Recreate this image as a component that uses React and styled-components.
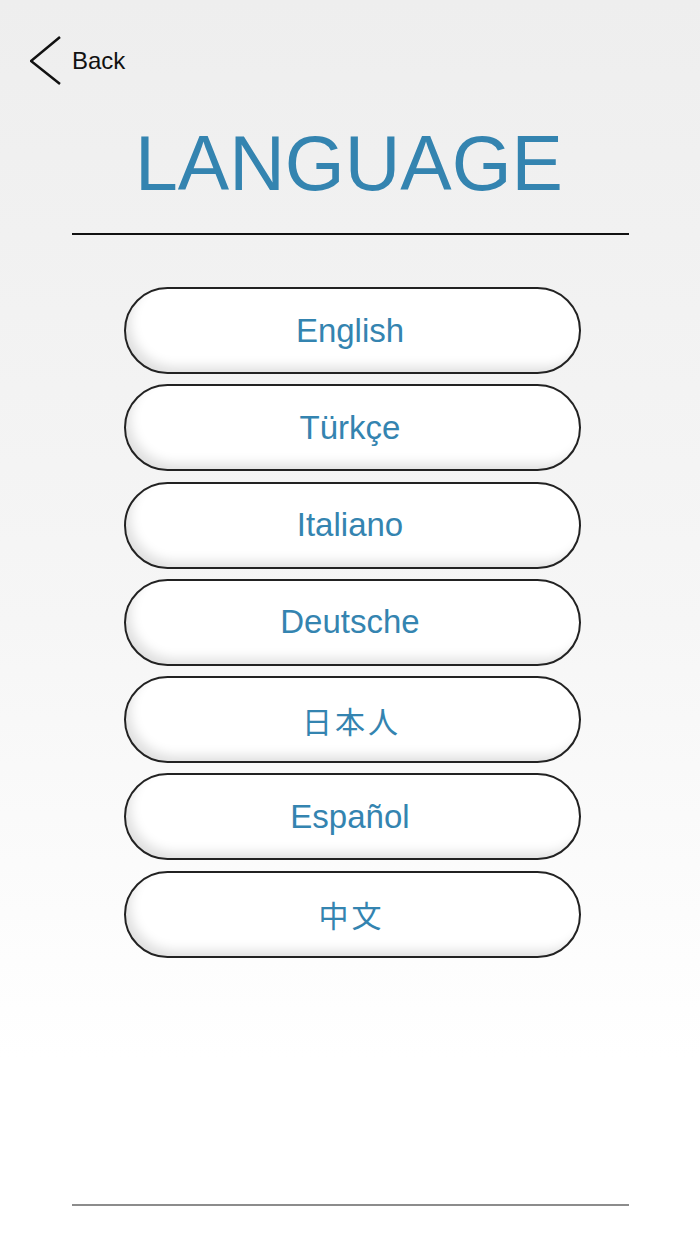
import React from "react";
import styled, { createGlobalStyle } from "styled-components";

const Global = createGlobalStyle`
  html, body { margin: 0; padding: 0; }
  body { font-family: "Liberation Sans", Arial, sans-serif; }
`;

const Page = styled.div`
  width: 700px;
  height: 1244px;
  box-sizing: border-box;
  background: linear-gradient(to bottom, #eeeeee 0%, #f6f6f6 50%, #ffffff 85%, #ffffff 100%);
  display: flex;
  flex-direction: column;
  overflow: hidden;
`;

const TopBar = styled.div`
  display: flex;
  align-items: center;
  gap: 10px;
  padding: 36px 0 0 30px;
  height: 50px;
`;

const BackLabel = styled.span`
  font-size: 24px;
  color: #111;
  line-height: 1;
`;

const Title = styled.h1`
  margin: 39px 0 0;
  padding-right: 2px;
  text-align: center;
  font-weight: 400;
  font-size: 77px;
  line-height: 1;
  color: #3484b0;
`;

const Rule = styled.div`
  margin: ${(p) => p.$mt}px 71px 0 72px;
  height: 2px;
  background: ${(p) => p.$color};
`;

const List = styled.div`
  margin-top: 52px;
  padding-left: 4px;
  display: flex;
  flex-direction: column;
  align-items: center;
  gap: 10.3px;
`;

const LangButton = styled.button`
  width: 457px;
  height: 87px;
  box-sizing: border-box;
  border: 2px solid #222;
  border-radius: 44px;
  background: #ffffff;
  box-shadow: inset 8px -9px 12px -4px rgba(0, 0, 0, 0.13);
  font-family: "Liberation Sans", Arial, "Noto Sans CJK JP", sans-serif;
  font-size: ${(p) => (p.$cjk ? 30 : 33)}px;
  letter-spacing: ${(p) => (p.$cjk ? 3 : 0)}px;
  text-indent: ${(p) => (p.$cjk ? 3 : 0)}px;
  color: #3484b0;
  padding: 0 4px 0 0;
  cursor: pointer;
`;

const Spacer = styled.div`
  flex: ${(p) => p.$flex};
`;

const languages = [
  { label: "English" },
  { label: "Türkçe" },
  { label: "Italiano" },
  { label: "Deutsche" },
  { label: "日本人", cjk: true },
  { label: "Español" },
  { label: "中文", cjk: true },
];

export default function App() {
  return (
    <Page>
      <Global />
      <TopBar>
        <svg width="32" height="50" viewBox="0 0 32 50">
          <path d="M30 1 L1 25 L30 48" fill="none" stroke="#111" strokeWidth="2.5" />
        </svg>
        <BackLabel>Back</BackLabel>
      </TopBar>
      <Title>LANGUAGE</Title>
      <Rule $mt={31} $color="#111" />
      <List>
        {languages.map((l) => (
          <LangButton key={l.label} $cjk={l.cjk}>
            {l.label}
          </LangButton>
        ))}
      </List>
      <Spacer $flex="1" />
      <Rule $mt={0} $color="#8c8c8c" />
      <Spacer $flex="0 0 38px" />
    </Page>
  );
}
